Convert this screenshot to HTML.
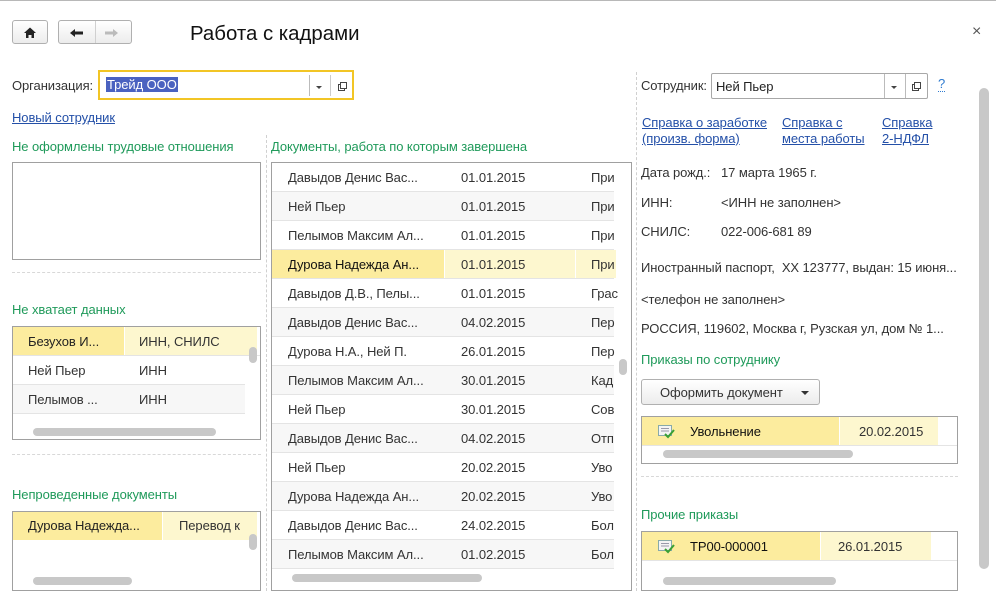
<!DOCTYPE html>
<html><head><meta charset="utf-8"><style>
*{margin:0;padding:0;box-sizing:border-box}
body{width:996px;height:596px;background:#fff;position:relative;overflow:hidden;font-family:"Liberation Sans",Arial,sans-serif;font-size:13px;color:#333;letter-spacing:-0.08px}
.a{position:absolute;white-space:nowrap}
.g{color:#1f9a5a}
.l{color:#2450a8;text-decoration:underline}
.box{position:absolute;border:1px solid #a0a0a0;background:#fff;overflow:hidden}
.row{position:absolute;left:0;right:0;border-bottom:1px solid #e4e4e4}
.alt{background:#f7f7f7}
.sel1{position:absolute;top:0;bottom:0;background:#fcec9e}
.sel2{position:absolute;top:0;bottom:0;background:#fdf7cf}
.hs{position:absolute;height:8px;border-radius:4px;background:#c8c8c8}
.vs{position:absolute;width:8px;border-radius:4px;background:#c8c8c8}
.hd{position:absolute;border-top:1px dashed #d8d8d8;height:0}
.vd{position:absolute;border-left:1px dashed #d0d0d0;width:0}
.btn{position:absolute;border:1px solid #b0b0b0;border-radius:3px;background:linear-gradient(#fff,#ececec)}
</style></head><body>
<div class="a" style="left:0;top:0;width:996px;height:1px;background:#b8b8b8"></div>

<div class="btn" style="left:12px;top:20px;width:36px;height:24px">
<svg width="36" height="24" style="position:absolute;left:0;top:0"><path d="M11 12 L17 6.5 L23 12 L21 12 L21 17 L18.5 17 L18.5 14 L15.5 14 L15.5 17 L13 17 L13 12 Z" fill="#222"/></svg></div>
<div class="btn" style="left:58px;top:20px;width:74px;height:24px">
<div style="position:absolute;left:36px;top:0;width:1px;height:22px;background:#d0d0d0"></div>
<svg width="74" height="24" style="position:absolute;left:0;top:0"><path d="M11 12 L16 8 L16 10.5 L24 10.5 L24 13.5 L16 13.5 L16 16 Z" fill="#222"/><path d="M59 12 L54 8 L54 10.5 L46 10.5 L46 13.5 L54 13.5 L54 16 Z" fill="#bbb"/></svg></div>
<div class="a" style="left:190px;top:23px;font-size:20.4px;color:#111;letter-spacing:0">Работа с кадрами</div>
<div class="a" style="left:972px;top:23px;font-size:16px;color:#555">×</div>

<div class="a" style="left:12px;top:78px">Организация:</div>
<div class="a" style="left:98px;top:70px;width:256px;height:30px;border:2px solid #f2c525;background:#fff">
<span class="a" style="left:6px;top:5px;background:#4a62c0;color:#fff;padding:0 1px">Трейд ООО</span>
<div class="a" style="left:209px;top:3px;width:1px;height:21px;background:#bbb"></div>
<div class="a" style="left:230px;top:3px;width:1px;height:21px;background:#ccc"></div>
<svg class="a" style="left:212px;top:8px" width="40" height="12"><path d="M4 6 L10 6 L7 9 Z" fill="#444"/><rect x="26.5" y="4.5" width="6" height="6" fill="none" stroke="#444"/><rect x="28.5" y="2.5" width="6" height="6" fill="#fff" stroke="#444"/></svg>
</div>
<div class="a l" style="left:12px;top:110px">Новый сотрудник</div>

<div class="a g" style="left:12px;top:139px">Не оформлены трудовые отношения</div>
<div class="box" style="left:12px;top:162px;width:249px;height:98px"></div>
<div class="hd" style="left:12px;top:272px;width:249px"></div>

<div class="a g" style="left:12px;top:302px">Не хватает данных</div>
<div class="box" style="left:12px;top:326px;width:249px;height:114px">
<div class="row" style="top:0;height:29px"><div class="sel1" style="left:0;width:111px"></div><div class="sel2" style="left:112px;width:132px"></div><span class="a" style="left:15px;top:7px;color:#222">Безухов И...</span><span class="a" style="left:126px;top:7px">ИНН, СНИЛС</span></div>
<div class="row" style="top:29px;height:29px;right:15px"><span class="a" style="left:15px;top:7px">Ней Пьер</span><span class="a" style="left:126px;top:7px">ИНН</span></div>
<div class="row alt" style="top:58px;height:29px;right:15px"><span class="a" style="left:15px;top:7px">Пелымов ...</span><span class="a" style="left:126px;top:7px">ИНН</span></div>
<div class="vs" style="left:236px;top:20px;height:16px"></div>
<div class="hs" style="left:20px;top:101px;width:183px"></div>
</div>
<div class="hd" style="left:12px;top:454px;width:249px"></div>

<div class="a g" style="left:12px;top:487px">Непроведенные документы</div>
<div class="box" style="left:12px;top:511px;width:249px;height:80px">
<div class="row" style="top:0;height:28px;border:0"><div class="sel1" style="left:0;width:149px"></div><div class="sel2" style="left:150px;width:94px"></div><span class="a" style="left:15px;top:6px;color:#222">Дурова Надежда...</span><span class="a" style="left:166px;top:6px">Перевод к</span></div>
<div class="vs" style="left:236px;top:22px;height:16px"></div>
<div class="hs" style="left:20px;top:65px;width:99px"></div>
</div>

<div class="vd" style="left:266px;top:135px;height:456px"></div>

<div class="a g" style="left:271px;top:139px">Документы, работа по которым завершена</div>
<div class="box" style="left:271px;top:162px;width:361px;height:429px">
<div class="row" style="top:0;height:29px;right:17px"><span class="a" style="left:16px;top:7px">Давыдов Денис Вас...</span><span class="a" style="left:189px;top:7px">01.01.2015</span><span class="a" style="left:319px;top:7px">При</span></div>
<div class="row alt" style="top:29px;height:29px;right:17px"><span class="a" style="left:16px;top:7px">Ней Пьер</span><span class="a" style="left:189px;top:7px">01.01.2015</span><span class="a" style="left:319px;top:7px">При</span></div>
<div class="row" style="top:58px;height:29px;right:17px"><span class="a" style="left:16px;top:7px">Пелымов Максим Ал...</span><span class="a" style="left:189px;top:7px">01.01.2015</span><span class="a" style="left:319px;top:7px">При</span></div>
<div class="row" style="top:87px;height:29px;right:17px"><div class="sel1" style="left:0;width:172px"></div><div class="sel2" style="left:173px;width:130px"></div><div class="sel2" style="left:304px;width:40px"></div><span class="a" style="left:16px;top:7px;color:#111">Дурова Надежда Ан...</span><span class="a" style="left:189px;top:7px">01.01.2015</span><span class="a" style="left:319px;top:7px">При</span></div>
<div class="row" style="top:116px;height:29px;right:17px"><span class="a" style="left:16px;top:7px">Давыдов Д.В., Пелы...</span><span class="a" style="left:189px;top:7px">01.01.2015</span><span class="a" style="left:319px;top:7px">Грас</span></div>
<div class="row alt" style="top:145px;height:29px;right:17px"><span class="a" style="left:16px;top:7px">Давыдов Денис Вас...</span><span class="a" style="left:189px;top:7px">04.02.2015</span><span class="a" style="left:319px;top:7px">Пер</span></div>
<div class="row" style="top:174px;height:29px;right:17px"><span class="a" style="left:16px;top:7px">Дурова Н.А., Ней П.</span><span class="a" style="left:189px;top:7px">26.01.2015</span><span class="a" style="left:319px;top:7px">Пер</span></div>
<div class="row alt" style="top:203px;height:29px;right:17px"><span class="a" style="left:16px;top:7px">Пелымов Максим Ал...</span><span class="a" style="left:189px;top:7px">30.01.2015</span><span class="a" style="left:319px;top:7px">Кад</span></div>
<div class="row" style="top:232px;height:29px;right:17px"><span class="a" style="left:16px;top:7px">Ней Пьер</span><span class="a" style="left:189px;top:7px">30.01.2015</span><span class="a" style="left:319px;top:7px">Сов</span></div>
<div class="row alt" style="top:261px;height:29px;right:17px"><span class="a" style="left:16px;top:7px">Давыдов Денис Вас...</span><span class="a" style="left:189px;top:7px">04.02.2015</span><span class="a" style="left:319px;top:7px">Отп</span></div>
<div class="row" style="top:290px;height:29px;right:17px"><span class="a" style="left:16px;top:7px">Ней Пьер</span><span class="a" style="left:189px;top:7px">20.02.2015</span><span class="a" style="left:319px;top:7px">Уво</span></div>
<div class="row alt" style="top:319px;height:29px;right:17px"><span class="a" style="left:16px;top:7px">Дурова Надежда Ан...</span><span class="a" style="left:189px;top:7px">20.02.2015</span><span class="a" style="left:319px;top:7px">Уво</span></div>
<div class="row" style="top:348px;height:29px;right:17px"><span class="a" style="left:16px;top:7px">Давыдов Денис Вас...</span><span class="a" style="left:189px;top:7px">24.02.2015</span><span class="a" style="left:319px;top:7px">Бол</span></div>
<div class="row alt" style="top:377px;height:29px;right:17px"><span class="a" style="left:16px;top:7px">Пелымов Максим Ал...</span><span class="a" style="left:189px;top:7px">01.02.2015</span><span class="a" style="left:319px;top:7px">Бол</span></div>
<div class="vs" style="left:347px;top:196px;height:16px"></div>
<div class="hs" style="left:20px;top:411px;width:190px"></div>
</div>

<div class="vd" style="left:636px;top:72px;height:519px"></div>

<div class="a" style="left:641px;top:78px">Сотрудник:</div>
<div class="a" style="left:711px;top:73px;width:217px;height:26px;border:1px solid #a8a8a8;border-radius:2px;background:#fff">
<span class="a" style="left:4px;top:5px;color:#222">Ней Пьер</span>
<div class="a" style="left:172px;top:0;width:1px;height:24px;background:#bbb"></div>
<div class="a" style="left:193px;top:0;width:1px;height:24px;background:#bbb"></div>
<svg class="a" style="left:175px;top:6px" width="40" height="12"><path d="M4 6 L10 6 L7 9 Z" fill="#444"/><rect x="25.5" y="4.5" width="6" height="6" fill="none" stroke="#444"/><rect x="27.5" y="2.5" width="6" height="6" fill="#fff" stroke="#444"/></svg>
</div>
<div class="a" style="left:938px;top:77px;color:#2f7bd0;border-bottom:1px dotted #2f7bd0;line-height:14px">?</div>

<div class="a l" style="left:642px;top:115px;line-height:16px">Справка о заработке<br>(произв. форма)</div>
<div class="a l" style="left:782px;top:115px;line-height:16px">Справка с<br>места работы</div>
<div class="a l" style="left:882px;top:115px;line-height:16px">Справка<br>2-НДФЛ</div>

<div class="a" style="left:641px;top:165px">Дата рожд.:</div><div class="a" style="left:721px;top:165px">17 марта 1965 г.</div>
<div class="a" style="left:641px;top:195px">ИНН:</div><div class="a" style="left:721px;top:195px">&lt;ИНН не заполнен&gt;</div>
<div class="a" style="left:641px;top:224px">СНИЛС:</div><div class="a" style="left:721px;top:224px">022-006-681 89</div>
<div class="a" style="left:641px;top:260px">Иностранный паспорт,&nbsp; XX 123777, выдан: 15 июня...</div>
<div class="a" style="left:641px;top:292px">&lt;телефон не заполнен&gt;</div>
<div class="a" style="left:641px;top:321px">РОССИЯ, 119602, Москва г, Рузская ул, дом № 1...</div>
<div class="a g" style="left:641px;top:352px">Приказы по сотруднику</div>

<div class="btn" style="left:641px;top:379px;width:179px;height:26px"><span class="a" style="left:18px;top:5px">Оформить документ</span><svg class="a" style="left:158px;top:10px" width="10" height="6"><path d="M1 1 L9 1 L5 5 Z" fill="#333"/></svg></div>

<div class="box" style="left:641px;top:416px;width:317px;height:48px">
<div class="row" style="top:0;height:29px;border-bottom:1px solid #e4e4e4"><div class="sel1" style="left:0;width:197px"></div><div class="sel2" style="left:198px;width:98px"></div>
<svg class="a" style="left:16px;top:8px" width="18" height="14"><rect x="0.5" y="0.5" width="13" height="10" fill="#f4f4f4" stroke="#8aa"/><path d="M3 3.5h8M3 6h8" stroke="#99a"/><path d="M7 9 L10 12 L16 5" stroke="#3aa035" stroke-width="2" fill="none"/></svg>
<span class="a" style="left:48px;top:7px;color:#111">Увольнение</span><span class="a" style="left:217px;top:7px">20.02.2015</span></div>
<div class="hs" style="left:21px;top:33px;width:190px"></div>
</div>
<div class="hd" style="left:641px;top:476px;width:317px"></div>

<div class="a g" style="left:641px;top:507px">Прочие приказы</div>
<div class="box" style="left:641px;top:531px;width:317px;height:60px">
<div class="row" style="top:0;height:29px"><div class="sel1" style="left:0;width:178px"></div><div class="sel2" style="left:179px;width:110px"></div>
<svg class="a" style="left:16px;top:8px" width="18" height="14"><rect x="0.5" y="0.5" width="13" height="10" fill="#f4f4f4" stroke="#8aa"/><path d="M3 3.5h8M3 6h8" stroke="#99a"/><path d="M7 9 L10 12 L16 5" stroke="#3aa035" stroke-width="2" fill="none"/></svg>
<span class="a" style="left:48px;top:7px;color:#111">ТР00-000001</span><span class="a" style="left:196px;top:7px">26.01.2015</span></div>
<div class="hs" style="left:21px;top:45px;width:173px"></div>
</div>

<div class="vs" style="left:979px;top:88px;width:10px;height:481px;border-radius:5px"></div>
</body></html>
